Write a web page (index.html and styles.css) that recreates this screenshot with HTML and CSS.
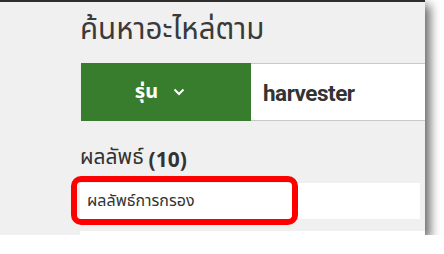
FILE: index.html
```html
<!DOCTYPE html>
<html lang="th">
<head>
<meta charset="utf-8">
<link rel="stylesheet" href="styles.css">
</head>
<body>
<div class="panel">
  <h1 class="title">ค้นหาอะไหล่ตาม</h1>
  <div class="search">
    <button class="type">
      <span class="type-label">รุ่น</span>
      <svg class="chevron" width="12" height="8" viewBox="0 0 12 8"><path d="M1.5 1.5 L6 6 L10.5 1.5" fill="none" stroke="#fff" stroke-width="2"/></svg>
    </button>
    <div class="query">harvester</div>
  </div>
  <h2 class="results-title"><span class="results-label">ผลลัพธ์</span> <b>(10)</b></h2>
  <div class="result-list">
    <div class="row">
      <span class="row-text">ผลลัพธ์การกรอง</span>
      <span class="callout"></span>
    </div>
    <div class="row"></div>
  </div>
</div>
</body>
</html>
```
FILE: styles.css
```css
html, body {
  margin: 0;
  padding: 0;
  background: #fff;
}
body {
  font-family: "Noto Sans", "Noto Sans Thai", sans-serif;
  color: #333;
}
.panel {
  width: 425px;
  height: 235px;
  overflow: hidden;
  background: #f0f0f0;
  border-top: 2px solid #2e2e2e;
  box-shadow: 5px 5px 10px rgba(0, 0, 0, 0.6);
  padding-left: 80px;
  box-sizing: border-box;
}
.title {
  margin: 0;
  height: 61px;
  font-size: 29.5px;
  font-weight: 400;
  line-height: 52px;
  color: #3a3a3a;
}
.search {
  display: flex;
  height: 58px;
  margin-left: 1px;
}
.type {
  width: 170px;
  flex: none;
  display: flex;
  align-items: center;
  justify-content: center;
  gap: 15px;
  padding: 0 12px 0 0;
  border: none;
  background: #387c2e;
  color: #fff;
  font-family: inherit;
  font-size: 20px;
  font-weight: 700;
}
.chevron {
  display: block;
}
.query {
  flex: 1;
  display: flex;
  align-items: center;
  padding-left: 12px;
  padding-top: 1px;
  background: #fff;
  border-top: 1px solid #c8c8c8;
  border-bottom: 1px solid #c8c8c8;
  font-family: Roboto, "Liberation Sans", sans-serif;
  font-size: 22.5px;
  letter-spacing: -0.5px;
  font-weight: 700;
  color: #333;
}
.results-title {
  margin: 0;
  height: 62px;
  display: flex;
  align-items: flex-end;
  padding-bottom: 10px;
  box-sizing: border-box;
  font-size: 21px;
  font-weight: 700;
  color: #333;
}
.results-label {
  font-weight: 400;
}
.results-title b {
  margin-left: 5px;
  font-weight: 700;
}
.result-list {
  display: flex;
  flex-direction: column;
  gap: 12px;
  width: 340px;
}
.row {
  position: relative;
  height: 36px;
  background: #fff;
  display: flex;
  align-items: center;
  padding-left: 7px;
  font-size: 16px;
  color: #333;
}
.row:last-child {
  width: 345px;
}
.callout {
  position: absolute;
  left: -9px;
  top: -7px;
  width: 227px;
  height: 49px;
  border: 6px solid #ff0000;
  border-radius: 10px;
  box-sizing: border-box;
}
```
